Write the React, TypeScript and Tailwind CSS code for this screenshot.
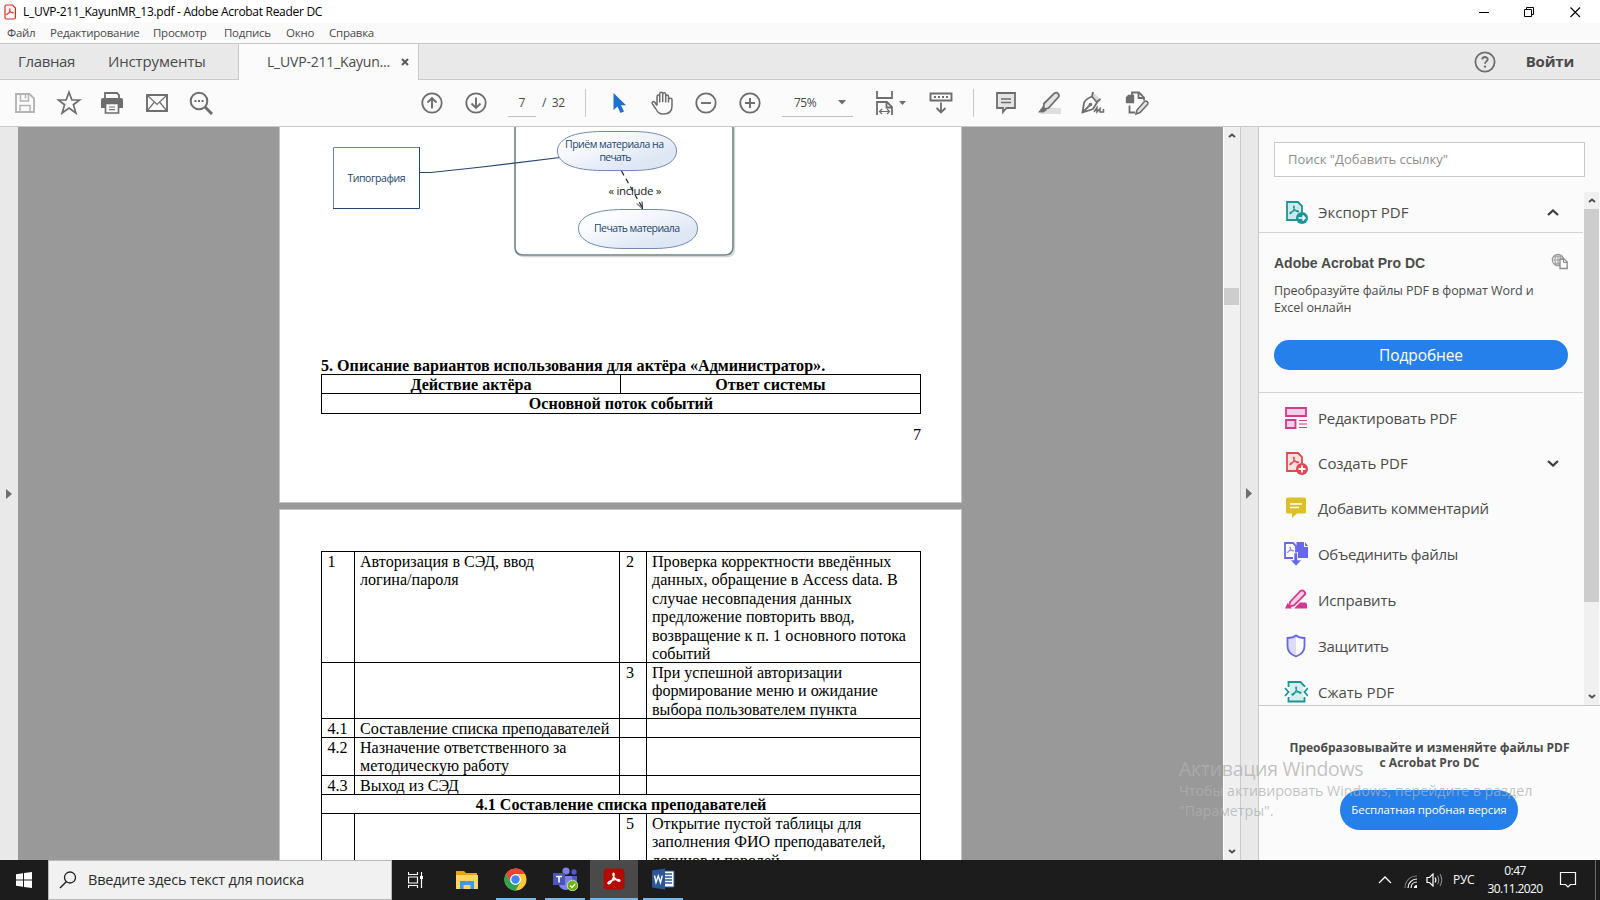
import type { ReactNode } from "react";

const G = "#6e6e6e";

function Svg({ w, h, children, className = "" }: { w: number; h: number; children: ReactNode; className?: string }) {
  return (
    <svg width={w} height={h} viewBox={`0 0 ${w} ${h}`} fill="none" className={`block shrink-0 ${className}`}>
      {children}
    </svg>
  );
}

function PdfGlyph({ color, x = 0, y = 0, s = 1 }: { color: string; x?: number; y?: number; s?: number }) {
  return (
    <path
      transform={`translate(${x} ${y}) scale(${s})`}
      d="M0.6 8.6C-0.6 7.8 3 5.9 5.6 5.5C8 5.1 10.2 5.7 9.4 6.5C8.4 7.3 5 4.6 4.3 2.1C3.9 0.2 5.3 0.2 5.1 1.8C4.8 4.2 2.2 9.4 0.6 8.6Z"
      stroke={color}
      strokeWidth="1.1"
    />
  );
}

function TitleBar() {
  return (
    <div className="flex h-[23px] items-center bg-white text-black">
      <Svg w={12} h={16} className="ml-1">
        <path d="M1 2.5a1.5 1.5 0 0 1 1.5-1.5H8.5L11.4 4V13.500a1.500 1.500 0 0 1-1.500 1.500H2.500a1.500 1.500 0 0 1-1.500-1.500Z" fill="#fff" stroke="#e0281c" strokeWidth="1.2" />
        <PdfGlyph color="#e0281c" x={2} y={4} s={0.8} />
      </Svg>
      <span className="ml-[7px] text-[12px] tracking-[-0.290px] whitespace-nowrap">L_UVP-211_KayunMR_13.pdf - Adobe Acrobat Reader DC</span>
      <Svg w={108} h={20} className="mr-[17px] ml-auto">
        <path d="M4 10.500H14" stroke="#000" />
        <path d="M49.500 7.500H56.500V14.500H49.500ZM51.500 7V5.500H58.500V12.500H57" stroke="#000" />
        <path d="M95.500 5.500L105 15M105 5.500L95.500 15" stroke="#000" strokeWidth="1.100" />
      </Svg>
    </div>
  );
}

function MenuBar() {
  return (
    <div className="flex h-[21px] items-center border-b border-[#c9c9c9] bg-[#fafafa] pl-[7px] text-[11.500px] tracking-[-0.250px] whitespace-nowrap text-[#4a4a4a]">
      <span className="w-[43px]">Файл</span>
      <span className="w-[103px]">Редактирование</span>
      <span className="w-[71px]">Просмотр</span>
      <span className="w-[62px]">Подпись</span>
      <span className="w-[43px]">Окно</span>
      <span>Справка</span>
    </div>
  );
}

function TabBar() {
  return (
    <div className="flex h-9 bg-[#e9e9e9] text-[15px] whitespace-nowrap text-[#4b4b4b]">
      <div className="flex w-[239px] shrink-0 items-center border-r border-b border-[#c9c9c9] pl-[18px]">
        <span className="w-[90px] tracking-[-0.350px]">Главная</span>
        <span className="tracking-[-0.150px]">Инструменты</span>
      </div>
      <div className="flex w-[179px] shrink-0 items-center bg-[#fbfbfb] pb-px pl-7 text-[14px]">
        <span className="w-[134px] tracking-[-0.2px]">L_UVP-211_Kayun...</span>
        <Svg w={8} h={8}>
          <path d="M1 1L7 7M7 1L1 7" stroke="#5a5a5a" strokeWidth="2" />
        </Svg>
      </div>
      <div className="flex grow items-center justify-end border-b border-l border-[#c9c9c9] pr-[26px]">
        <Svg w={22} h={22}>
          <circle cx="11" cy="11" r="9.600" stroke={G} strokeWidth="1.800" />
          <path d="M8.300 8.600C8.300 5.200 13.700 5.300 13.700 8.400C13.700 10.300 11 10.500 11 12.700" stroke={G} strokeWidth="1.900" />
          <circle cx="11" cy="15.600" r="1.200" fill={G} />
        </Svg>
        <span className="ml-[30px] text-[15px] font-bold tracking-[-0.200px]">Войти</span>
      </div>
    </div>
  );
}

function CircleIcon({ d }: { d: string }) {
  return (
    <Svg w={22} h={22}>
      <circle cx="11" cy="11" r="9.700" stroke={G} strokeWidth="1.800" />
      <path d={d} stroke={G} strokeWidth="1.900" />
    </Svg>
  );
}

function Toolbar() {
  return (
    <div className="flex h-[47px] items-center border-b border-[#c9c9c9] bg-[#fbfbfb] pl-[14px] text-[12px] text-[#4a4a4a]">
      <Svg w={22} h={22}>
        <path d="M2 2H15.500L20 6.500V20H2Z" stroke="#b4b4b4" strokeWidth="1.900" />
        <path d="M6.500 2V9H14.500V2M6 20V13.500H16V20" stroke="#b4b4b4" strokeWidth="1.500" />
        <path d="M11.500 3V6.500" stroke="#b4b4b4" strokeWidth="1.500" />
      </Svg>
      <Svg w={26} h={26} className="ml-5">
        <path d="M13 2.200L15.900 10H23.700L17.400 14.700L19.900 23L13 18.100L6.100 23L8.600 14.700L2.300 10H10.100Z" stroke={G} strokeWidth="1.700" />
      </Svg>
      <Svg w={24} h={24} className="ml-[18px]">
        <path d="M5 7V2H17L19 4V7" stroke={G} strokeWidth="1.800" />
        <path d="M3 7H21A2 2 0 0 1 23 9V17H19V12H5V17H1V9A2 2 0 0 1 3 7Z" fill={G} />
        <path d="M5.500 12.500H18.500V22H5.500Z" fill="#fbfbfb" stroke={G} strokeWidth="1.700" />
        <path d="M9 16H15M9 18.700H15" stroke={G} strokeWidth="1.200" />
      </Svg>
      <Svg w={24} h={20} className="ml-[21px]">
        <path d="M2 2H22V18H2Z" stroke={G} strokeWidth="1.900" />
        <path d="M2.500 2.500L12 11.500L21.500 2.500M2.500 17.500L9 9.500M21.500 17.500L15 9.500" stroke={G} strokeWidth="1.200" />
      </Svg>
      <Svg w={26} h={26} className="ml-[19px]">
        <circle cx="11" cy="11" r="8.300" stroke={G} strokeWidth="2" />
        <path d="M17 17L24 24" stroke={G} strokeWidth="3" />
        <path d="M6.500 11H8.500M10 11H12M13.500 11H15.500" stroke={G} strokeWidth="1.800" />
      </Svg>
      <div className="ml-[207px] flex w-[66px] justify-between">
        <CircleIcon d="M11 16.500V6M6.500 10.500L11 6L15.500 10.500" />
        <CircleIcon d="M11 5.500V16M6.500 11.500L11 16L15.500 11.500" />
      </div>
      <div className="ml-[21px] flex h-[27px] w-7 items-center justify-center border-b border-[#c0c0c0]">7</div>
      <span className="ml-[6px] w-6 tracking-[-0.300px] whitespace-pre">/&nbsp; 32</span>
      <div className="ml-[19px] h-7 w-px bg-[#c9c9c9]" />
      <Svg w={16} h={22} className="ml-[26px]">
        <path d="M1.500 1V18L5.500 14.500L8.500 21L12 19.500L9 13.200H14Z" fill="#1f6fce" />
      </Svg>
      <Svg w={24} h={26} className="ml-[22px]">
        <path
          d="M7 15.500V6.500C7 4.600 9.700 4.600 9.700 6.500V12.500V3.700C9.700 1.800 12.700 1.800 12.700 3.700V12V4.200C12.700 2.400 15.700 2.400 15.700 4.200V12.500V6.200C15.700 4.500 18.500 4.500 18.500 6.200V12.500V9.500C18.500 7.800 22 7.800 22 9.500V16C22 21.500 18.500 24 13.500 24C9 24 7.500 22 5.500 18.500L2.300 13.700C1.300 12 3.500 10.800 4.800 12.300L7 15.500"
          stroke={G}
          strokeWidth="1.500"
        />
      </Svg>
      <div className="ml-[21px] flex w-[66px] justify-between">
        <CircleIcon d="M6 11H16" />
        <CircleIcon d="M6 11H16M11 6V16" />
      </div>
      <div className="ml-[21px] flex h-[27px] w-[71px] items-center border-b border-[#c0c0c0] pl-3">
        <span className="w-[43.500px] tracking-[-0.500px]">75%</span>
        <Svg w={8} h={5}>
          <path d="M0 0H8L4 4.500Z" fill={G} />
        </Svg>
      </div>
      <Svg w={32} h={26} className="ml-[22px]">
        <path d="M2 1V8H17V1M2 25V12H12L17 17V25M11.500 12V17.500H17" stroke={G} strokeWidth="1.800" />
        <path d="M5 21.500H14M7 19L4.500 21.500L7 24M12 19L14.500 21.500L12 24" stroke={G} strokeWidth="1.200" />
        <path d="M24 11H31L27.500 15Z" fill={G} />
      </Svg>
      <Svg w={24} h={24} className="ml-[22px]">
        <path d="M1.500 2.500H22.500V9.500H1.500Z" stroke={G} strokeWidth="1.900" />
        <path d="M5 6H19" stroke={G} strokeWidth="2.200" strokeDasharray="2 2" />
        <path d="M12 11.500V21.500M7.500 17L12 21.500L16.500 17" stroke={G} strokeWidth="1.800" />
      </Svg>
      <div className="ml-[20px] h-7 w-px bg-[#c9c9c9]" />
      <Svg w={22} h={24} className="ml-[21px]">
        <path d="M2 2H20V17H11.500L8 21V17H2Z" fill="#e4e4e4" stroke={G} strokeWidth="1.800" />
        <path d="M6 8H16M6 11.500H16" stroke={G} strokeWidth="1.400" />
      </Svg>
      <Svg w={24} h={24} className="ml-[20px]">
        <path d="M7 17H24V23H3Z" fill="#dedede" />
        <path d="M7 12.500L17.500 2.200C20 0.500 23 3.500 21.500 6L11.500 17L6.500 18.500Z" fill="#e4e4e4" stroke={G} strokeWidth="1.800" />
        <path d="M6 15L10 19L6.500 21.500H1Z" fill={G} />
      </Svg>
      <Svg w={26} h={26} className="ml-[19px]">
        <path d="M13 2L20 9L17 12L12 6Z" fill="#d8d8d8" />
        <path d="M13 2L12 6.500C7 8.500 5 10 4 13L2.500 22.500L13 19L17 12.500L12 6.500M17 12L20.500 9M2.500 22.500L9.500 15.500" stroke={G} strokeWidth="1.800" />
        <circle cx="10.500" cy="14.500" r="1.800" fill={G} />
        <path d="M14 22L17 17.500V22L20 18.500V22H23.500V19" stroke={G} strokeWidth="1.500" />
      </Svg>
      <Svg w={26} h={26} className="ml-[19px]">
        <path d="M7 5V2.500H14L19 7.500V10.500M13.500 2V8H19M4.500 15.500V22.500H10" stroke={G} strokeWidth="1.800" />
        <path d="M1.500 7.500L3.500 5.500H8.500V12.500H1.500Z" fill={G} stroke={G} strokeWidth="1.300" />
        <path d="M12 20L19.500 11.500C21 10 24 12.500 22.700 14.200L15 22.500L11 24Z" fill="#e4e4e4" stroke={G} strokeWidth="1.600" />
      </Svg>
    </div>
  );
}

function Diagram() {
  const t = { fill: "#24466f", fontSize: 10.5, textAnchor: "middle" as const };
  return (
    <svg width="681" height="140" viewBox="280 127 681 140" className="block" fill="none">
      <defs>
        <linearGradient id="bubble" x1="0" y1="0" x2="1" y2="1">
          <stop offset="0.250" stopColor="#fbfcfe" />
          <stop offset="0.750" stopColor="#dfe7f4" />
        </linearGradient>
      </defs>
      <path d="M516.500 120V248.500Q516.500 256.500 524.500 256.500H726.500Q734.500 256.500 734.500 248.500V120" stroke="#d4d6d6" strokeWidth="1.500" />
      <path d="M515 120V247Q515 255 523 255H725Q733 255 733 247V120" stroke="#6f8484" strokeWidth="1.600" fill="#fff" />
      <path d="M333.500 208V147.500H419" stroke="#6d86a8" />
      <path d="M419.500 147V208.500H333" stroke="#24466f" />
      <path d="M420 172.500H431L482 167L560 157.500" stroke="#24466f" strokeWidth="1.200" />
      <path d="M557.500 151C557.500 139 573 131.500 603 131.500H632C661 131.500 676.500 139 676.500 151C676.500 163 661 170.500 632 170.500H603C573 170.500 557.500 163 557.500 151Z" fill="url(#bubble)" stroke="#6f8bb0" />
      <path d="M578.500 228.500C578.500 216.500 594 209.500 624 209.500H653C682 209.500 697.500 216.500 697.500 228.500C697.500 240.500 682 248.500 653 248.500H624C594 248.500 578.500 240.500 578.500 228.500Z" fill="url(#bubble)" stroke="#6f8bb0" />
      <path d="M621.500 171L642.500 208" stroke="#222" strokeWidth="1.200" strokeDasharray="5 4" />
      <path d="M637 203.500L642.500 209L642 201.500" stroke="#222" />
      <text x="376.500" y="182" textLength="58" {...t}>Типография</text>
      <text x="614.500" y="148" textLength="99" {...t}>Приём материала на</text>
      <text x="615.500" y="161" textLength="32" {...t}>печать</text>
      <text x="637" y="232" textLength="86" {...t}>Печать материала</text>
      <text x="635" y="195" textLength="53" fill="#222" fontSize="11.500" textAnchor="middle">« include »</text>
    </svg>
  );
}

type Row = { h: string; n: string; a: string[]; m: string; b: string[] };

const rows: Row[] = [
  { h: "h-[111px]", n: "1", a: ["Авторизация в СЭД, ввод", "логина/пароля"], m: "2", b: ["Проверка корректности введённых", "данных, обращение в Access data. В", "случае несовпадения данных", "предложение повторить ввод,", "возвращение к п. 1 основного потока", "событий"] },
  { h: "h-[56px]", n: "", a: [], m: "3", b: ["При успешной авторизации", "формирование меню и ожидание", "выбора пользователем пункта"] },
  { h: "h-[19px]", n: "4.1", a: ["Составление списка преподавателей"], m: "", b: [] },
  { h: "h-[38px]", n: "4.2", a: ["Назначение ответственного за", "методическую работу"], m: "", b: [] },
  { h: "h-[19px]", n: "4.3", a: ["Выход из СЭД"], m: "", b: [] },
];
const tail: Row = { h: "h-[80px]", n: "", a: [], m: "5", b: ["Открытие пустой таблицы для", "заполнения ФИО преподавателей,", "логинов и паролей"] };

function Lines({ items }: { items: string[] }) {
  return (
    <div className="border-l border-black pt-px pl-[5px] whitespace-nowrap">
      {items.map((s) => (
        <div key={s}>{s}</div>
      ))}
    </div>
  );
}

function TableRow({ r }: { r: Row }) {
  return (
    <div className={`grid grid-cols-[32px_265px_27px_1fr] border-t border-black leading-[18.4px] ${r.h}`}>
      <div className="pt-px pl-[5.500px]">{r.n}</div>
      <Lines items={r.a} />
      <div className="border-l border-black pt-px pl-[6px]">{r.m}</div>
      <Lines items={r.b} />
    </div>
  );
}

function Document() {
  return (
    <div className="h-full w-[1205px] shrink-0 overflow-hidden bg-[#999999] pl-[261px] font-['Liberation_Serif',serif] text-[16.100px] text-black">
      <div className="h-[376px] w-[683px] border-x border-b border-[#c4c4c4] bg-white">
        <div className="h-[140px] font-['Open_Sans',sans-serif]">
          <Diagram />
        </div>
        <div className="mt-[90px] ml-[41px] w-[600px] font-bold">
          <div className="h-[17px] leading-[18px] whitespace-nowrap">5. Описание вариантов использования для актёра «Администратор».</div>
          <div className="border border-black text-center leading-[19px]">
            <div className="flex h-[19px] border-b border-black">
              <div className="w-[298px]">Действие актёра</div>
              <div className="grow border-l border-black">Ответ системы</div>
            </div>
            <div className="h-[19px]">Основной поток событий</div>
          </div>
          <div className="mt-[11px] text-right leading-5 font-normal">7</div>
        </div>
      </div>
      <div className="mt-[6px] h-[400px] w-[683px] border border-[#c4c4c4] bg-white pt-[41px] pl-[41px]">
        <div className="w-[600px] border-x border-black">
          {rows.map((r) => (
            <TableRow key={r.m + r.n} r={r} />
          ))}
          <div className="h-[19px] border-t border-black text-center leading-[19px] font-bold">4.1 Составление списка преподавателей</div>
          <TableRow r={tail} />
        </div>
      </div>
    </div>
  );
}

function Chevron({ up = false, w = 8, color = "#505050", sw = 2 }: { up?: boolean; w?: number; color?: string; sw?: number }) {
  const h = w / 2 + 2;
  return (
    <Svg w={w + 2} h={h}>
      <path d={up ? `M1 ${h - 1}L${w / 2 + 1} 1.500L${w + 1} ${h - 1}` : `M1 1L${w / 2 + 1} ${h - 1.5}L${w + 1} 1`} stroke={color} strokeWidth={sw} />
    </Svg>
  );
}

const tools: { h: string; label: string; cls: string; icon: ReactNode; open?: boolean }[] = [
  {
    h: "h-[50px]", label: "Редактировать PDF", cls: "tracking-[-0.150px]",
    icon: <g stroke="#d83790" strokeWidth="1.800"><path d="M2 2H22V10H2Z" fill="#f5d0e5" /><path d="M2 14H11.500V22H2Z" fill="#f5d0e5" /><path d="M15 14.500H23M15 18H23M15 21.500H23" strokeWidth="1.200" /></g>,
  },
  {
    h: "h-[40px]", label: "Создать PDF", cls: "tracking-[-0.050px]", open: true,
    icon: <><path d="M3 2H14L18 6V20H3Z" fill="#fae0e1" stroke="#e34850" strokeWidth="1.800" /><PdfGlyph color="#e34850" x={5.500} y={5.500} s={0.950} /><circle cx="18" cy="18" r="6" fill="#e34850" /><path d="M14.500 18H21.500M18 14.500V21.500" stroke="#fff" strokeWidth="2" /></>,
  },
  {
    h: "h-[50px]", label: "Добавить комментарий", cls: "tracking-[-0.200px]",
    icon: <><path d="M3.500 1.500H20.500Q22 1.500 22 3V16Q22 17.500 20.500 17.500H13L8 22V17.500H3.500Q2 17.500 2 16V3Q2 1.500 3.500 1.500Z" fill="#dfbf27" /><path d="M6 8H18M6 11.500H15" stroke="#fff" strokeWidth="1.400" /></>,
  },
  {
    h: "h-[42px]", label: "Объединить файлы", cls: "tracking-[-0.320px]",
    icon: <><path d="M9 16H1V1H9L12 4V11" fill="#fff" stroke="#6767ec" strokeWidth="1.800" /><PdfGlyph color="#6767ec" x={3} y={4.500} s={0.700} /><path d="M12.500 0H20V5H24V16H14V10H12.500Z" fill="#6767ec" /><path d="M21 0L24 4H21Z" fill="#6767ec" /><path d="M10 11H13.500V18H17.500L12 24L6.500 18H10Z" fill="#6767ec" stroke="#fbfbfb" strokeWidth="0.600" /></>,
  },
  {
    h: "h-[50px]", label: "Исправить", cls: "tracking-[-0.150px]",
    icon: <><path d="M10 20.500L16 14.500H21Q23 14.500 23 16.500V20.500Z" fill="#d83790" /><path d="M6 14L16.500 3C19 1 22.500 4.500 20.500 7L10 17.500L5 18.500Z" fill="#f5d0e5" stroke="#d83790" strokeWidth="1.800" /><path d="M3.500 15L8 20.500H1Z" fill="#d83790" /></>,
  },
  {
    h: "h-[42px]", label: "Защитить", cls: "tracking-[-0.250px]",
    icon: <><path d="M12 1.500C9.500 3.500 6.500 4 3.500 4V12C3.500 17 6.500 20.500 12 22.500Z" fill="#dcdcf8" /><path d="M12 1.500C9.500 3.500 6.500 4 3.500 4V12C3.500 17 6.500 20.500 12 22.500C17.500 20.500 20.500 17 20.500 12V4C17.500 4 14.500 3.500 12 1.500Z" stroke="#6767ec" strokeWidth="1.800" /></>,
  },
  {
    h: "h-[50px]", label: "Сжать PDF", cls: "",
    icon: <g stroke="#1d9499" strokeWidth="1.800"><path d="M4.500 7V2H16.500L20.500 6V7M20.500 17V21.500H4.500V17" fill="#d5eeee" /><path d="M6 7H19V17H6Z" fill="#d5eeee" stroke="none" /><path d="M1 8L4.500 12L1 16M24 8L20.500 12L24 16" /><PdfGlyph color="#1d9499" x={7.500} y={6.500} s={1} /></g>,
  },
];

function Side() {
  return (
    <div className="flex w-[341px] flex-col bg-[#fbfbfb] text-[#4b4b4b]">
      <div className="mt-[15px] ml-[15px] flex h-[35px] w-[311px] shrink-0 items-center border border-[#c9c9c9] bg-white pt-px pl-[13px] text-[13px] text-[#8e8e8e]">
        <span className="whitespace-nowrap">Поиск "Добавить ссылку"</span>
      </div>
      <div className="mt-[15px] flex h-[514px] shrink-0 border-b border-[#c9c9c9]">
        <div className="w-[324px] overflow-hidden">
          <div className="flex h-[41px] items-center border-b border-[#d3d3d3] pl-[25px] text-[15px]">
            <Svg w={24} h={24}>
              <path d="M3 2H14L18 6V20H3Z" fill="#cfe9ea" stroke="#1d9499" strokeWidth="1.800" />
              <PdfGlyph color="#1d9499" x={5.500} y={5.500} s={0.950} />
              <circle cx="18" cy="18" r="6" fill="#1d9499" />
              <path d="M14.500 18H21M18.500 15.500L21 18L18.500 20.500" stroke="#fff" strokeWidth="1.700" />
            </Svg>
            <span className="ml-[10px] w-[229px]">Экспорт PDF</span>
            <Chevron up w={10} color="#3e3e3e" sw={2.3} />
          </div>
          <div className="flex h-[160px] flex-col border-b border-[#d3d3d3] pl-[15px]">
            <div className="mt-5 flex h-[20px] items-center font-['Liberation_Sans',sans-serif] text-[14px] font-bold">
              <span className="w-[277px]">Adobe Acrobat Pro DC</span>
              <Svg w={17} h={17} className="mb-1">
                <circle cx="7" cy="7" r="5.700" stroke="#9b9b9b" strokeWidth="1.200" />
                <path d="M7 1V13M1 7H13M2.500 3.800H11.500M2.500 10.200H11.500" stroke="#9b9b9b" />
                <ellipse cx="7" cy="7" rx="3" ry="5.700" stroke="#9b9b9b" />
                <path d="M9 6H13L16.200 9V15.500H9Z" fill="#fbfbfb" stroke="#8a8a8a" strokeWidth="1.300" />
                <path d="M12.500 6V9.500H16" stroke="#8a8a8a" />
              </Svg>
            </div>
            <p className="mt-[9px] text-[12.500px] leading-[17px] tracking-[-0.080px] whitespace-nowrap">
              Преобразуйте файлы PDF в формат Word и
              <br />
              Excel онлайн
            </p>
            <div className="mt-[24px] flex h-[30px] w-[294px] items-center justify-center rounded-full bg-[#2680eb] pt-px text-[15.500px] tracking-[-0.100px] text-white">Подробнее</div>
          </div>
          {tools.map((t) => (
            <div key={t.label} className={`flex items-center pl-[25px] text-[15px] ${t.h}`}>
              <Svg w={24} h={24}>{t.icon}</Svg>
              <span className={`ml-[10px] w-[229px] whitespace-nowrap ${t.cls}`}>{t.label}</span>
              {t.open && <Chevron w={10} color="#3e3e3e" sw={2.3} />}
            </div>
          ))}
        </div>
        <div className="ml-px flex w-[15px] flex-col items-center bg-[#f0f0f0]">
          <div className="flex h-[17px] items-center"><Chevron up w={6} /></div>
          <div className="h-[393px] w-full bg-[#cdcdcd]" />
          <div className="mt-auto flex h-[17px] items-center"><Chevron w={6} /></div>
        </div>
      </div>
      <div className="mt-[34px] text-center text-[12px] leading-[15px] font-bold whitespace-nowrap">
        Преобразовывайте и изменяйте файлы PDF
        <br />с Acrobat Pro DC
      </div>
      <div className="mt-[20px] ml-[81px] flex h-10 w-[178px] items-center justify-center rounded-full bg-[#2680eb] text-[11.500px] tracking-[-0.100px] whitespace-nowrap text-white">Бесплатная пробная версия</div>
    </div>
  );
}

function Taskbar() {
  return (
    <div className="flex h-10 items-center bg-[#1c1c1c] text-[12px] text-white">
      <Svg w={16} h={16} className="ml-4">
        <path d="M0 2.300L7 1.300V7.500H0ZM8 1.100L16 0V7.500H8ZM0 8.500H7V14.700L0 13.700ZM8 8.500H16V16L8 14.900Z" fill="#fff" />
      </Svg>
      <div className="ml-4 flex h-10 w-[344px] items-center border border-[#b8b8b8] bg-[#f1f1f1] pl-[10px] text-[14.500px] text-[#2b2b2b]">
        <Svg w={18} h={18}>
          <circle cx="11" cy="6.500" r="5.500" stroke="#222" strokeWidth="1.300" />
          <path d="M7.500 10.500L1 17" stroke="#222" strokeWidth="1.500" />
        </Svg>
        <span className="ml-[11px] tracking-[-0.220px] whitespace-nowrap">Введите здесь текст для поиска</span>
      </div>
      <Svg w={16} h={16} className="ml-4">
        <path d="M0.500 0V2.500H9.500V0M0.500 16V13.500H9.500V16M0.500 5H9.500V11H0.500ZM13.500 0V16" stroke="#fff" strokeWidth="1.200" />
        <path d="M12 4H15V7H12Z" fill="#fff" />
      </Svg>
      <Svg w={24} h={20} className="ml-[31px]">
        <path d="M1 1H9L11 3H22V19H1Z" fill="#e5a50f" />
        <path d="M1 5H23V19H1Z" fill="#fcd462" />
        <path d="M5 11H19V19H15.500V15H8.500V19H5Z" fill="#3c9be0" />
      </Svg>
      <div className="ml-[17px] flex h-10 w-10 items-center justify-center border-b-2 border-[#76b9ed] pr-px">
        <Svg w={23} h={23}>
          <circle cx="11.500" cy="11.500" r="11" fill="#fcc934" />
          <path d="M1.970 6A11 11 0 0 1 21.030 6H11.500L6.700 14.250Z" fill="#ea4335" />
          <path d="M1.970 6A11 11 0 0 0 11.500 22.500L16.300 14.250L11.500 16L6.700 14.250Z" fill="#30a350" />
          <circle cx="11.500" cy="11.500" r="5.400" fill="#fff" />
          <circle cx="11.500" cy="11.500" r="4.200" fill="#4285f4" />
        </Svg>
      </div>
      <div className="ml-[9px] flex h-10 w-10 items-center justify-center border-b-2 border-[#76b9ed]">
        <Svg w={26} h={24}>
          <circle cx="14" cy="4" r="3.600" fill="#7b83eb" />
          <circle cx="22" cy="5" r="2.700" fill="#5059c9" />
          <path d="M18 9H25V16Q25 19 21 20H18Z" fill="#5059c9" />
          <path d="M7 9H20V17Q19 23 13 23Q8 22 7 18Z" fill="#7b83eb" />
          <path d="M1 6H13V18H1Z" fill="#4b53bc" />
          <path d="M4 9.500H10M7 9.500V15.500" stroke="#fff" strokeWidth="1.600" />
          <circle cx="20.500" cy="18.500" r="5.300" fill="#6bb700" stroke="#e8f5d8" strokeWidth="0.800" />
          <path d="M18 18.500L20 20.500L23.300 16.800" stroke="#fff" strokeWidth="1.400" />
        </Svg>
      </div>
      <div className="ml-[5px] flex h-10 w-12 items-center justify-center border-b-2 border-[#76b9ed] bg-[#4a4a4a]">
        <Svg w={22} h={22}>
          <rect x="0.500" y="0.500" width="21" height="21" rx="4" fill="#b30b00" />
          <PdfGlyph color="#fff" x={4.500} y={4.500} s={1.300} />
        </Svg>
      </div>
      <div className="ml-[5px] flex h-10 w-10 items-center justify-center border-b-2 border-[#76b9ed] pr-px">
        <Svg w={24} h={22}>
          <path d="M12 3H23V19H12Z" fill="#fff" stroke="#2b579a" />
          <path d="M14 6H21M14 9H21M14 12H21M14 15H21" stroke="#2b579a" strokeWidth="1.300" />
          <path d="M1 2.500L14 0.500V21.500L1 19.500Z" fill="#2b579a" />
          <path d="M3.500 7.500L5 14.500L7.300 8L9.500 14.500L11.300 7.500" stroke="#fff" strokeWidth="1.400" />
        </Svg>
      </div>
      <div className="ml-auto flex items-center">
        <Svg w={14} h={8}>
          <path d="M1 7L7 1L13 7" stroke="#fff" strokeWidth="1.300" />
        </Svg>
        <Svg w={14} h={14} className="mt-1 ml-[12px]">
          <path d="M1 13C1 6 6 1 13 1" stroke="#777" strokeWidth="1.200" />
          <path d="M4 13C4 8 8 4 13 4M7 13C7 9.500 9.500 7 13 7" stroke="#fff" strokeWidth="1.200" />
          <path d="M10 13C10 11 11 10 13 10V13Z" fill="#fff" />
        </Svg>
        <Svg w={18} h={14} className="ml-[8px]">
          <path d="M1 4.500H3.500L7 1V13L3.500 9.500H1Z" stroke="#fff" strokeWidth="1.200" />
          <path d="M9 4.500Q10.700 7 9 9.500" stroke="#fff" strokeWidth="1.200" />
          <path d="M11.500 2.800Q14 7 11.500 11.200M14 1Q17.500 7 14 13" stroke="#8a8a8a" strokeWidth="1.100" />
        </Svg>
        <span className="ml-[9px] w-[24px] tracking-[-0.3px]">РУС</span>
        <div className="ml-[9px] w-[58px] text-center leading-[18px] whitespace-nowrap">
          <div className="tracking-[-0.6px]">0:47</div>
          <div className="tracking-[-0.6px]">30.11.2020</div>
        </div>
        <Svg w={18} h={18} className="ml-[15px]">
          <path d="M1.500 1.500H16.500V13.500H11.500L9 16L6.500 13.500H1.500Z" stroke="#fff" strokeWidth="1.200" />
        </Svg>
        <div className="mr-1 ml-[18px] h-10 w-px bg-[#6e6e6e]" />
      </div>
    </div>
  );
}

export default function App() {
  return (
    <div className="relative flex h-[900px] w-[1600px] flex-col overflow-hidden font-['Open_Sans','Noto_Sans',sans-serif]">
      <TitleBar />
      <MenuBar />
      <TabBar />
      <Toolbar />
      <div className="flex h-[733px] shrink-0">
        <div className="flex w-[18px] shrink-0 items-center bg-[#e9e9e9] pl-[6px]">
          <Svg w={6} h={10}>
            <path d="M0 0V10L6 5Z" fill={G} />
          </Svg>
        </div>
        <Document />
        <div className="flex w-[17px] shrink-0 flex-col items-center border-l border-white bg-[#f0f0f0] pr-px">
          <div className="flex h-[17px] items-center"><Chevron up w={6} /></div>
          <div className="mt-[144px] h-[17px] w-[15px] bg-[#cdcdcd]" />
          <div className="mt-auto flex h-[17px] items-center"><Chevron w={6} /></div>
        </div>
        <div className="flex w-[19px] shrink-0 items-center border-x border-[#c9c9c9] bg-[#e9e9e9] pl-[5px]">
          <Svg w={6} h={11}>
            <path d="M0 0V11L6 5.500Z" fill={G} />
          </Svg>
        </div>
        <Side />
      </div>
      <Taskbar />
      <div className="absolute top-[756px] left-[1179px] text-[14.200px] leading-[20px] whitespace-nowrap text-[#b0b0b0]/75">
        <div className="text-[19.500px] leading-[25px] tracking-[-0.300px]">Активация Windows</div>
        <div>Чтобы активировать Windows, перейдите в раздел</div>
        <div>"Параметры".</div>
      </div>
    </div>
  );
}
